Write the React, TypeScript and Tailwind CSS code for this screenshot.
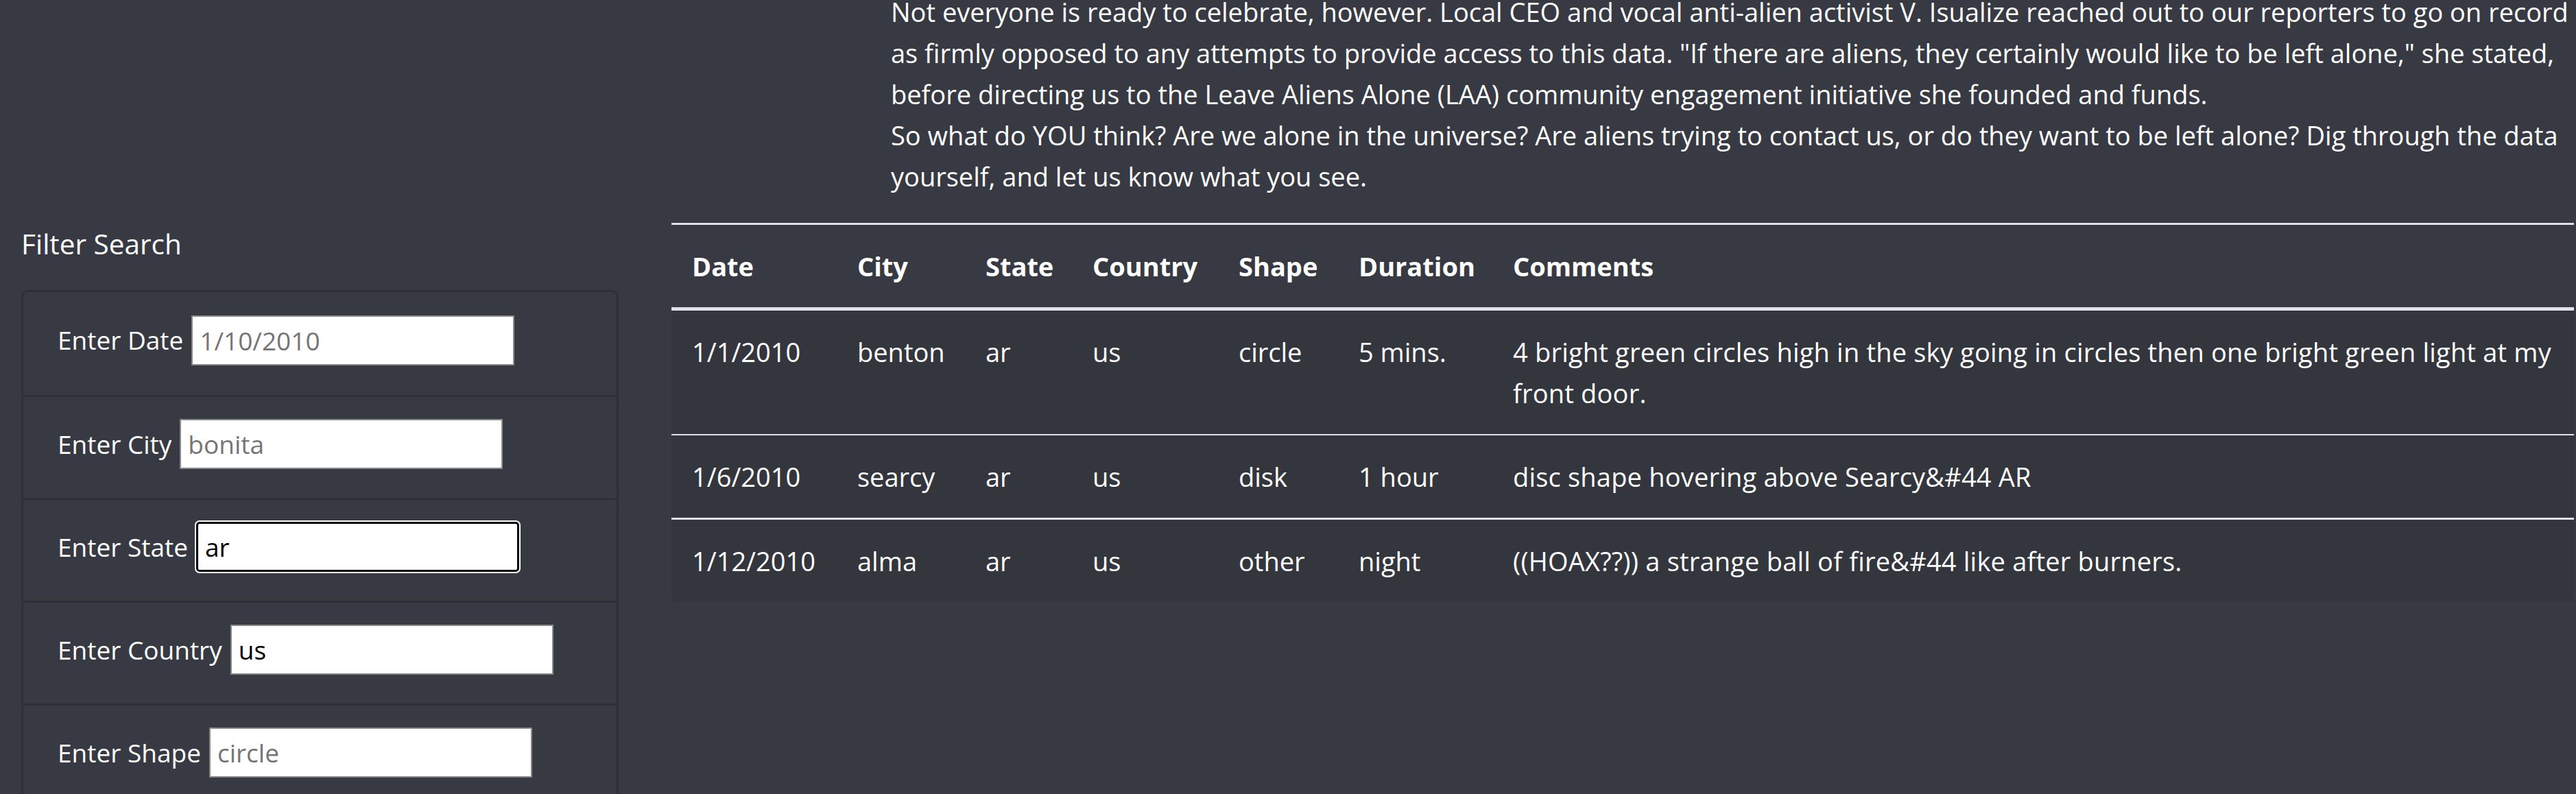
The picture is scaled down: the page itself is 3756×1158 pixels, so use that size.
import React from 'react'

// ---------------------------------------------------------------------------
// Data
// ---------------------------------------------------------------------------

const FILTERS = [
  { label: 'Enter Date', placeholder: '1/10/2010', value: '' },
  { label: 'Enter City', placeholder: 'bonita', value: '' },
  { label: 'Enter State', placeholder: 'CA', value: 'ar', focused: true },
  { label: 'Enter Country', placeholder: 'us', value: 'us' },
  { label: 'Enter Shape', placeholder: 'circle', value: '' },
]

const COLUMNS = [
  { key: 'datetime', title: 'Date', width: 'w-[241px]' },
  { key: 'city', title: 'City', width: 'w-[187px]' },
  { key: 'state', title: 'State', width: 'w-[156px]' },
  { key: 'country', title: 'Country', width: 'w-[213px]' },
  { key: 'shape', title: 'Shape', width: 'w-[175px]' },
  { key: 'duration', title: 'Duration', width: 'w-[225px]' },
  { key: 'comments', title: 'Comments', width: '' },
]

const ROWS = [
  {
    datetime: '1/1/2010', city: 'benton', state: 'ar', country: 'us', shape: 'circle', duration: '5 mins.',
    comments: ['4 bright green circles high in the sky going in circles then one bright green light at my', 'front door.'],
    border: 'border-b-2',
  },
  {
    datetime: '1/6/2010', city: 'searcy', state: 'ar', country: 'us', shape: 'disk', duration: '1 hour',
    comments: ['disc shape hovering above Searcy&#44 AR'],
    border: 'border-b-[3px]',
  },
  {
    datetime: '1/12/2010', city: 'alma', state: 'ar', country: 'us', shape: 'other', duration: 'night',
    comments: ['((HOAX??)) a strange ball of fire&#44 like after burners.'],
    border: '',
  },
]

const ARTICLE = [
  'Not everyone is ready to celebrate, however. Local CEO and vocal anti-alien activist V. Isualize reached out to our reporters to go on record',
  'as firmly opposed to any attempts to provide access to this data. "If there are aliens, they certainly would like to be left alone," she stated,',
  'before directing us to the Leave Aliens Alone (LAA) community engagement initiative she founded and funds.',
]

const ARTICLE_2 = [
  'So what do YOU think? Are we alone in the universe? Are aliens trying to contact us, or do they want to be left alone? Dig through the data',
  'yourself, and let us know what you see.',
]

// ---------------------------------------------------------------------------
// Filter panel
// ---------------------------------------------------------------------------

function FilterItem({ label, placeholder, value, focused, first }: {
  label: string
  placeholder: string
  value: string
  focused?: boolean
  first?: boolean
}) {
  return (
    <li className={`flex h-[150px] items-center pb-[10px] pl-[50px] ${first ? '' : 'border-t-[3px] border-[#2e3036]'}`}>
      <label className="whitespace-nowrap text-[37px] text-white">{label}</label>
      <input
        type="text"
        readOnly
        value={value}
        placeholder={placeholder}
        className={`ml-[12px] h-[73px] w-[471px] bg-white px-[10px] text-[37px] text-black placeholder:text-[#757575] outline-none
          ${focused ? 'rounded-[5px] border-[3px] border-black shadow-[0_0_0_2px_white]' : 'border-2 border-[#8a8a8a]'}`}
      />
    </li>
  )
}

function FilterPanel() {
  return (
    <aside className="w-[979px] shrink-0 pt-[7px]">
      <h5 className="ml-[31px] text-[40.5px] leading-[48px] text-white">Filter Search</h5>
      <ul className="ml-[31px] mt-[43px] w-[871px] rounded-[10px] border-[3px] border-[#2e3036]">
        {FILTERS.map((f, i) => (
          <FilterItem key={f.label} {...f} first={i === 0} />
        ))}
      </ul>
    </aside>
  )
}

// ---------------------------------------------------------------------------
// Results table
// ---------------------------------------------------------------------------

function UfoTable() {
  return (
    <div className="flex-1 pr-[3px]">
      <table className="w-full table-fixed border-collapse text-[38px] leading-[60px] text-white">
        <colgroup>
          {COLUMNS.map(c => <col key={c.key} className={c.width} />)}
        </colgroup>
        <thead>
          <tr className="border-t-[3px] border-b-[5px] border-[#dee2e6]">
            {COLUMNS.map(c => (
              <th key={c.key} className="px-[30px] py-[30px] text-left font-bold">{c.title}</th>
            ))}
          </tr>
        </thead>
        <tbody className="bg-[#33363d]">
          {ROWS.map(r => (
            <tr key={r.datetime} className={`${r.border} border-[#dee2e6] align-top`}>
              <td className="px-[30px] py-[30px] whitespace-nowrap">{r.datetime}</td>
              <td className="px-[30px] py-[30px]">{r.city}</td>
              <td className="px-[30px] py-[30px]">{r.state}</td>
              <td className="px-[30px] py-[30px]">{r.country}</td>
              <td className="px-[30px] py-[30px]">{r.shape}</td>
              <td className="px-[30px] py-[30px] whitespace-nowrap">{r.duration}</td>
              <td className="px-[30px] py-[30px]">
                {r.comments.map(line => (
                  <span key={line} className="block whitespace-nowrap tracking-[0.2px]">{line}</span>
                ))}
              </td>
            </tr>
          ))}
        </tbody>
      </table>
    </div>
  )
}

// ---------------------------------------------------------------------------
// Page
// ---------------------------------------------------------------------------

export default function App() {
  return (
    <div
      className="min-h-screen w-full overflow-hidden bg-[#373a42] text-white"
      style={{ fontFamily: '"Open Sans", "Noto Sans", sans-serif' }}
    >
      <article className="mt-[-13px] pl-[1299px] text-[38px] leading-[60px]">
        <p>
          {ARTICLE.map(line => <span key={line} className="block whitespace-nowrap">{line}</span>)}
        </p>
        <p>
          {ARTICLE_2.map(line => <span key={line} className="block whitespace-nowrap">{line}</span>)}
        </p>
      </article>

      <div className="mt-[38px] flex">
        <FilterPanel />
        <UfoTable />
      </div>
    </div>
  )
}
